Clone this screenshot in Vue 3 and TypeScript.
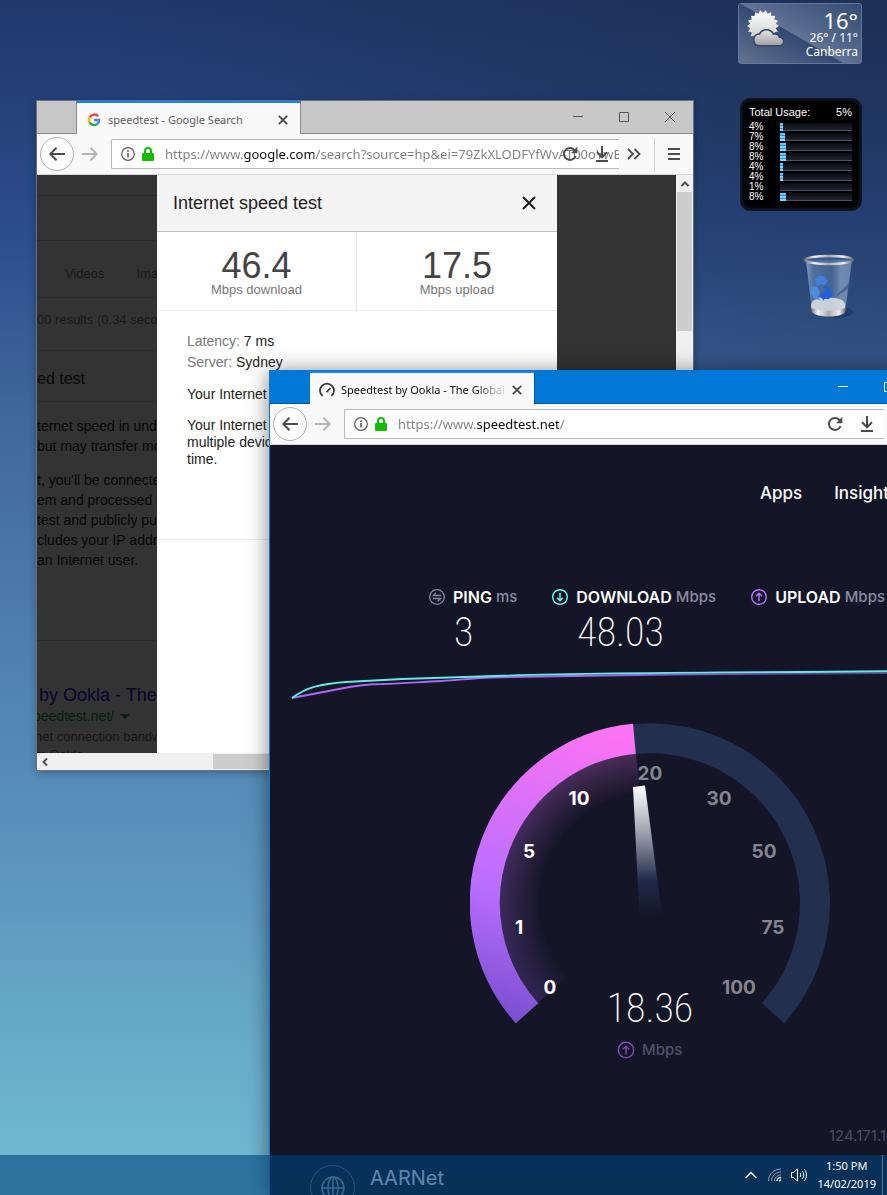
<script setup lang="ts">
interface BrowserWindow {
  id: string
  title: string
  url: string
}

const windows: BrowserWindow[] = [
  {
    id: 'google',
    title: 'speedtest - Google Search',
    url: 'https://www.google.com/search?source=hp&ei=79ZkXLODFYfWvAT00oYwBg',
  },
  { id: 'ookla', title: 'Speedtest by Ookla - The Global Broadband', url: 'https://www.speedtest.net/' },
]

const cores: { load: number; width: number }[] = [
  { load: 4, width: 3 },
  { load: 7, width: 5 },
  { load: 8, width: 6 },
  { load: 8, width: 6 },
  { load: 4, width: 3 },
  { load: 4, width: 3 },
  { load: 1, width: 0 },
  { load: 8, width: 6 },
]

const ticks = [
  { text: '0', x: 80, y: 271, on: true },
  { text: '1', x: 49, y: 211, on: true },
  { text: '5', x: 59, y: 135, on: true },
  { text: '10', x: 109, y: 82, on: true },
  { text: '20', x: 180, y: 57, on: false },
  { text: '30', x: 249, y: 82, on: false },
  { text: '50', x: 294, y: 135, on: false },
  { text: '75', x: 303, y: 211, on: false },
  { text: '100', x: 269, y: 271, on: false },
]

function sunPoints(): string {
  const points: string[] = []
  for (let i = 0; i < 36; i++) {
    const r = i % 2 ? 13 : 16
    const a = (i * Math.PI) / 18
    points.push(`${(18 + r * Math.cos(a)).toFixed(2)},${(17 + r * Math.sin(a)).toFixed(2)}`)
  }
  return points.join(' ')
}
const sun = sunPoints()
</script>

<template>
  <main class="desktop">
    <aside class="gadgets">
      <section class="weather" aria-label="Weather">
        <svg class="sky" viewBox="0 0 40 38" aria-hidden="true">
          <defs>
            <linearGradient id="sunFill" x1="0" y1="0" x2="0" y2="1">
              <stop offset="0" stop-color="#fff" /><stop offset="1" stop-color="#c9c9c9" />
            </linearGradient>
            <linearGradient id="cloudFill" x1="0" y1="0" x2="0" y2="1">
              <stop offset="0" stop-color="#e4e4e4" /><stop offset="1" stop-color="#a2a2a2" />
            </linearGradient>
          </defs>
          <polygon :points="sun" fill="url(#sunFill)" />
          <path d="M10 33c-2-5 2-8 5-7 2-6 11-6 13 0 3-1 5 0 6 3 5 0 5 6 1 7H15c-3 0-5-1-5-3z" fill="url(#cloudFill)" stroke="#34466b" stroke-width="3" paint-order="stroke" />
        </svg>
        <div class="readings">
          <strong>16°</strong>
          <span>26° / 11°</span>
          <span>Canberra</span>
        </div>
      </section>

      <section class="cpu" aria-label="Processor usage">
        <header><span>Total Usage:</span><span>5%</span></header>
        <ul>
          <li v-for="(core, i) in cores" :key="i">
            <span>{{ core.load }}%</span>
            <div class="track"><div class="level" :style="{ width: core.width + 'px' }"></div></div>
          </li>
        </ul>
      </section>

      <a class="bin" href="#" aria-label="Recycle Bin">
        <svg viewBox="0 0 54 68" width="54" height="68" aria-hidden="true">
          <defs>
            <linearGradient id="glass" x1="0" x2="1">
              <stop offset="0" stop-color="#c9dcf0" stop-opacity=".6" />
              <stop offset=".15" stop-color="#7fa4cf" stop-opacity=".45" />
              <stop offset=".55" stop-color="#6f95c2" stop-opacity=".35" />
              <stop offset=".75" stop-color="#b6cde6" stop-opacity=".5" />
              <stop offset="1" stop-color="#a9c2de" stop-opacity=".5" />
            </linearGradient>
            <linearGradient id="metal" x1="0" x2="1">
              <stop offset="0" stop-color="#777" /><stop offset=".2" stop-color="#f4f4f4" />
              <stop offset=".5" stop-color="#aaa" /><stop offset=".8" stop-color="#f0f0ee" />
              <stop offset="1" stop-color="#666" />
            </linearGradient>
          </defs>
          <ellipse cx="34" cy="60" rx="16" ry="6" fill="#0c2348" opacity=".35" />
          <path d="M3 8l6 52c4 6 29 6 33 0l7-52z" fill="url(#glass)" />
          <path d="M8 53c1-6 8-7 12-8 8 1 20 0 22 7v4c-6 5-28 5-34 0z" fill="#dfe3e5" opacity=".85" />
          <path d="M8 55c4 5 29 5 35 0l-1 5c-4 6-28 6-33 0z" fill="url(#metal)" />
          <path d="M11 28l5-4h5l4 5-3 4-4-1-4 2z" fill="#3f80dc" />
          <path d="M8 34l6 1 3 5-2 4 2 4-5-1-4-5z" fill="#4c8de4" />
          <path d="M21 34l5 1 3 8-3 4h-5v2l-4-5 5-5v3l1-1z" fill="#1d5fe0" />
          <path d="M34 43c4-5 10-8 13-14v5c-3 5-8 6-13 10z" fill="#31598e" opacity=".7" />
          <ellipse cx="26" cy="8" rx="24" ry="4" fill="#4c72a3" fill-opacity=".5" stroke="url(#metal)" stroke-width="2.400" />
        </svg>
      </a>
    </aside>

    <article v-for="win in windows" :key="win.id" class="window" :class="win.id">
      <header class="titlebar">
        <div class="tab">
          <svg v-if="win.id === 'google'" width="16" height="16" viewBox="0 0 16 16" fill="none" stroke-width="2.4" aria-hidden="true">
            <path d="M12.1 4.3A5 5 0 0 0 3.7 5.5" stroke="#ea4335" />
            <path d="M3.7 5.4a5 5 0 0 0 0 5.2" stroke="#fbbc05" />
            <path d="M3.6 10.4a5 5 0 0 0 7.8 1.4" stroke="#34a853" />
            <path d="M8 8h5a5 5 0 0 1-1.7 3.9" stroke="#4285f4" />
          </svg>
          <svg v-else width="16" height="16" viewBox="0 0 16 16" fill="none" stroke="#38383d" stroke-width="1.8" aria-hidden="true">
            <path d="M3.6 14A7 7 0 1 1 12.4 14M7.5 10.2l4-4.2" />
          </svg>
          <span class="tab-title">{{ win.title }}</span>
          <button class="tab-close" aria-label="Close tab">
            <svg width="10" height="10" viewBox="0 0 10 10" stroke="#444" stroke-width="1.7"><path d="M.8.8l8.4 8.4M9.2.8L.8 9.2" /></svg>
          </button>
        </div>
        <div class="controls">
          <button aria-label="Minimize"><svg width="10" height="10" viewBox="0 0 10 10"><path d="M0 4.5h10" /></svg></button>
          <button aria-label="Maximize"><svg width="10" height="10" viewBox="0 0 10 10"><path d="M.5.5h9v9h-9z" /></svg></button>
          <button aria-label="Close"><svg width="10" height="10" viewBox="0 0 10 10"><path d="M0 0l10 10M10 0L0 10" /></svg></button>
        </div>
      </header>

      <nav class="toolbar" aria-label="Navigation">
        <button class="back" aria-label="Back">
          <svg width="16" height="16" viewBox="0 0 16 16" fill="none" stroke="#4c4c50" stroke-width="2"><path d="M16 8H1.5M7.5 1.8L1.3 8l6.2 6.2" /></svg>
        </button>
        <button class="forward" aria-label="Forward" disabled>
          <svg width="16" height="16" viewBox="0 0 16 16" fill="none" stroke="#b5b5b7" stroke-width="2"><path d="M0 8h14.5M8.5 1.8L14.7 8l-6.2 6.2" /></svg>
        </button>
        <div class="address">
          <svg width="14" height="14" viewBox="0 0 14 14" fill="none" stroke="#5c5c60" aria-hidden="true">
            <circle cx="7" cy="7" r="6.3" stroke-width="1.2" /><path d="M7 6v4.6M7 3.2v1.7" stroke-width="1.6" />
          </svg>
          <svg width="12" height="14" viewBox="0 0 12 14" aria-hidden="true">
            <path d="M3 7V4a3 3 0 0 1 6 0v3" fill="none" stroke="#12bc00" stroke-width="2" />
            <rect y="6" width="12" height="8" rx="1" fill="#12bc00" />
          </svg>
          <input type="text" :value="win.url" aria-label="Address" spellcheck="false" />
          <div class="address-actions">
            <button aria-label="Reload">
              <svg width="16" height="16" viewBox="0 0 16 16" fill="none" stroke="#4c4c50" stroke-width="2"><path d="M13.6 10A6 6 0 1 1 13 4.6" /><path d="M15.3.8v6.4H9z" fill="#4c4c50" stroke="none" /></svg>
            </button>
            <button aria-label="Downloads">
              <svg width="14" height="16" viewBox="0 0 14 16" fill="none" stroke="#4c4c50" stroke-width="2"><path d="M7 0v11M2 6.3l5 5 5-5M1 15h12" /></svg>
            </button>
          </div>
        </div>
        <button class="more" aria-label="More tools">
          <svg width="14" height="12" viewBox="0 0 14 12" fill="none" stroke="#4c4c50" stroke-width="1.8"><path d="M1 1l5 5-5 5M7.500 1l5 5-5 5" /></svg>
        </button>
        <button class="menu" aria-label="Menu">
          <svg width="12" height="12" viewBox="0 0 12 12" stroke="#4c4c50" stroke-width="2"><path d="M0 1h12M0 6h12M0 11h12" /></svg>
        </button>
      </nav>

      <div v-if="win.id === 'google'" class="google-page">
        <div class="results">
          <div class="r-top"></div>
          <div class="r-search"></div>
          <div class="r-tabs"><a href="#">Videos</a><a href="#">Images</a></div>
          <div class="r-count">00 results (0.34 seconds)</div>
          <h2>ed test</h2>
          <div class="r-about">
            <p>ternet speed in under<br />but may transfer more</p>
            <p>t, you'll be connected to<br />em and processed by<br />test and publicly published<br />cludes your IP address<br />an Internet user.</p>
          </div>
          <div class="r-hit">
            <a href="#">by Ookla - The</a>
            <cite>peedtest.net/ <i></i></cite>
            <p>net connection bandwidth<br />m Ookla</p>
          </div>
        </div>

        <section class="dialog">
          <header>
            <h1>Internet speed test</h1>
            <button aria-label="Close"><svg width="14" height="14" viewBox="0 0 14 14" stroke="#1b1b1b" stroke-width="2"><path d="M1 1l12 12M13 1L1 13" /></svg></button>
          </header>
          <div class="speeds">
            <div><strong>46.4</strong><span>Mbps download</span></div>
            <div><strong>17.5</strong><span>Mbps upload</span></div>
          </div>
          <div class="details">
            <dl>
              <div><dt>Latency:</dt> <dd>7 ms</dd></div>
              <div><dt>Server:</dt> <dd>Sydney</dd></div>
            </dl>
            <p>Your Internet connection is very fast.</p>
            <p>Your Internet connection should be able to handle multiple devices streaming HD videos at the same time.</p>
          </div>
        </section>

        <div class="shade"></div>
        <div class="vscroll">
          <svg width="16" height="17" viewBox="0 0 16 17" fill="none" stroke="#505050" stroke-width="2"><path d="M4.500 11L8 7.500l3.500 3.500" /></svg>
          <div class="thumb"></div>
        </div>
        <div class="hscroll">
          <svg width="16" height="16" viewBox="0 0 16 16" fill="none" stroke="#505050" stroke-width="2"><path d="M10 4.500L6.500 8l3.500 3.500" /></svg>
          <div class="thumb"></div>
        </div>
      </div>

      <div v-else class="ookla-page">
        <div class="ookla-content">
          <nav class="site-nav"><a href="#">Apps</a><a href="#">Insights</a></nav>

          <section class="metrics">
            <div>
              <h3>
                <svg width="16" height="16" viewBox="0 0 16 16" fill="none" stroke="#8a8ba3" stroke-width="1.3"><circle cx="8" cy="8" r="7.300" /><path d="M12 6.500H4.500L7 3.800M4 9.500h7.500L9 12.200" /></svg>
                PING <small>ms</small>
              </h3>
              <output>3</output>
            </div>
            <div>
              <h3>
                <svg width="16" height="16" viewBox="0 0 16 16" fill="none" stroke="#6afff3" stroke-width="1.400"><circle cx="8" cy="8" r="7.300" /><path d="M8 4v7.500M5 8.700l3 3 3-3" /></svg>
                DOWNLOAD <small>Mbps</small>
              </h3>
              <output>48.03</output>
            </div>
            <div>
              <h3>
                <svg width="16" height="16" viewBox="0 0 16 16" fill="none" stroke="#bf71ff" stroke-width="1.400"><circle cx="8" cy="8" r="7.300" /><path d="M8 12V4.500M5 7.300l3-3 3 3" /></svg>
                UPLOAD <small>Mbps</small>
              </h3>
            </div>
          </section>

          <svg class="chart" width="760" height="40" viewBox="0 0 760 40" fill="none" stroke-width="1.800" aria-hidden="true">
            <defs>
              <linearGradient id="upTrace" gradientUnits="userSpaceOnUse" x1="0" y1="0" x2="760" y2="0">
                <stop offset=".4" stop-color="#b266f5" /><stop offset=".75" stop-color="#594287" />
              </linearGradient>
            </defs>
            <path d="M22 33L69 24C89 20 97 19 112 19C139 18 149 17 172 16C189 15 204 13 220 12.500L300 11L400 9.500L540 8.500L760 7.500" stroke="url(#upTrace)" />
            <path d="M22 33C37 22 50 19 76 17C110 15 145 13 210 11.500C300 8 400 7.500 530 7L760 5" stroke="#5ceee4" />
          </svg>

          <svg class="gauge" width="360" height="360" viewBox="0 0 360 360" role="img" aria-label="Upload speed 18.36 Mbps">
            <defs>
              <linearGradient id="arc" gradientUnits="userSpaceOnUse" x1="60" y1="300" x2="150" y2="0">
                <stop offset="0" stop-color="#7b50cf" />
                <stop offset=".38" stop-color="#b96eff" />
                <stop offset="1" stop-color="#ff74f2" />
              </linearGradient>
              <radialGradient id="glow" gradientUnits="userSpaceOnUse" cx="180" cy="180" r="150">
                <stop offset=".72" stop-color="#fff" stop-opacity="0" />
                <stop offset="1" stop-color="#fff" stop-opacity=".25" />
              </radialGradient>
              <mask id="fade"><rect width="360" height="360" fill="url(#glow)" /></mask>
              <linearGradient id="needle" x1="0" y1="0" x2="0" y2="1">
                <stop offset="0" stop-color="#fff" />
                <stop offset=".35" stop-color="#a0a3b0" />
                <stop offset=".72" stop-color="#1f2b4a" />
                <stop offset="1" stop-color="#1f2b4a" stop-opacity="0" />
              </linearGradient>
            </defs>
            <path d="M57 290.200A165 165 0 1 1 303 290.200" fill="none" stroke="#222f4e" stroke-width="30" />
            <path d="M180 180L68 280A150 150 0 0 1 166 30.600Z" fill="url(#arc)" mask="url(#fade)" />
            <path d="M57 290.200A165 165 0 0 1 164.400 15.700" fill="none" stroke="url(#arc)" stroke-width="30" />
            <path d="M163 64l12-1.500 17 130-22.500 2z" fill="url(#needle)" />
            <text v-for="t in ticks" :key="t.text" :x="t.x" :y="t.y" :class="{ on: t.on }">{{ t.text }}</text>
            <text class="reading" x="180" y="299">18.36</text>
            <g fill="none" stroke="#7f48ad" stroke-width="1.500"><circle cx="156" cy="327" r="7.700" /><path d="M156 331.500v-8M152.700 326.500l3.300-3.300 3.300 3.300" /></g>
            <text class="unit" x="172" y="332">Mbps</text>
          </svg>

          <footer>
            <span class="ip">124.171.100.1</span>
            <div class="provider">
              <span class="globe">
                <svg width="24" height="24" viewBox="0 0 24 24" fill="none" stroke="#9b9cb0" stroke-width="1.500"><circle cx="12" cy="12" r="11" /><ellipse cx="12" cy="12" rx="5" ry="11" /><path d="M1 12h22M12 1v22" /></svg>
              </span>
              <span>AARNet</span>
            </div>
          </footer>
        </div>
      </div>
    </article>

    <footer class="taskbar">
      <button aria-label="Show hidden icons"><svg width="12" height="8" viewBox="0 0 12 8" fill="none" stroke="#fff" stroke-width="1.500"><path d="M.7 7L6 1.500 11.300 7" /></svg></button>
      <button aria-label="Network">
        <svg width="14" height="14" viewBox="0 0 14 14" fill="none" stroke="#8ba3bb"><path d="M.5 13C.5 6 6 1 13 1M3.500 13C3.500 8 8 4 13 4M6.500 13C6.500 10 9 7 13 7" /><path d="M9 13c0-2 2-3.500 4-3.500M11 13l2-1" stroke="#fff" stroke-width="1.500" /></svg>
      </button>
      <button aria-label="Volume">
        <svg width="16" height="14" viewBox="0 0 16 14" fill="none" stroke="#fff"><path d="M.5 4.500h2l4-3.500v12l-4-3.500h-2zM9 5c1 1 1 3 0 4M11 3c2.300 2 2.300 6 0 8M13.200 1c3 3 3 9 0 12" /></svg>
      </button>
      <time><span>1:50 PM</span><span>14/02/2019</span></time>
      <button class="peek" aria-label="Show desktop"></button>
    </footer>
  </main>
</template>

<style>
html,
body {
  background: #6aaecb;
}
</style>

<style scoped>
* {
  box-sizing: border-box;
}
button {
  display: flex;
  align-items: center;
  justify-content: center;
  padding: 0;
  border: 0;
  background: none;
}
svg {
  display: block;
  flex: none;
}
h1, h2, h3, p, ul, dl, dd {
  margin: 0;
  padding: 0;
  font-weight: 400;
}
a {
  color: inherit;
  text-decoration: none;
}
.desktop {
  position: relative;
  min-height: 100vh;
  overflow: hidden;
  background:
    radial-gradient(ellipse 90% 50% at 100% 0, rgba(26, 42, 70, 0.6), transparent),
    linear-gradient(180deg, #20386c 0, #2b4b8a 18%, #41699f 36%, #5080b2 55%, #5b94bd 72%, #6ab0cb 90%, #72bad2 100%);
  font-family: "Noto Sans", sans-serif;
}
.gadgets {
  display: flex;
  flex-direction: column;
  align-items: flex-end;
  padding: 3px 25px;
}
.weather {
  display: flex;
  justify-content: space-between;
  width: 124px;
  height: 61px;
  padding: 5px 3px 0 6px;
  border: 1px solid #65779a;
  border-radius: 3px;
  background:
    linear-gradient(210deg, rgba(255, 255, 255, 0.08) 0, rgba(255, 255, 255, 0.24) 53%, transparent 54%),
    linear-gradient(30deg, #63728e, #2a4270 55%, #223c69);
  color: #fff;
}
.sky {
  width: 40px;
  height: 38px;
}
.readings {
  display: flex;
  flex-direction: column;
  align-items: flex-end;
  font-size: 12px;
  line-height: 14px;
  white-space: nowrap;
}
.readings strong {
  font-size: 22px;
  font-weight: 400;
  line-height: 22px;
}
.cpu {
  width: 122px;
  height: 113px;
  margin-top: 34px;
  padding: 7px 9px 7px 8px;
  border: 1px solid #10182b;
  border-radius: 10px;
  background: #000;
  box-shadow: inset 0 0 5px #26303f;
  color: #fff;
  font-family: "Liberation Sans", sans-serif;
  font-size: 10px;
}
.cpu header {
  display: flex;
  justify-content: space-between;
  padding-bottom: 4px;
  font-size: 11px;
  line-height: 12px;
}
.cpu ul {
  list-style: none;
}
.cpu li {
  display: flex;
  align-items: center;
  justify-content: space-between;
  height: 10px;
  line-height: 10px;
}
.track {
  width: 72px;
  height: 8px;
  border-bottom: 1px solid #495066;
  background: linear-gradient(#0b0c10, #20222e);
}
.level {
  height: 8px;
  background: linear-gradient(#5fc8ff 0 2px, #1597ee 2px 3px, #7cd4ff 3px 5px, #1597ee 5px 6px, #8ad8ff 6px);
}
.bin {
  margin: 41px 5px 0 0;
}

/* Browser windows */
.window {
  position: absolute;
  display: flex;
  flex-direction: column;
}
.window.google {
  left: 37px;
  top: 101px;
  width: 656px;
  height: 669px;
  box-shadow: 0 0 0 1px #66707f, 0 2px 8px rgba(0, 0, 0, 0.35);
}
.window.ookla {
  left: 269px;
  top: 370px;
  bottom: 0;
  width: 689px;
  border-left: 1px solid #0a78d4;
  box-shadow: 0 2px 20px rgba(0, 0, 0, 0.5);
}
.titlebar {
  display: flex;
  flex: none;
  justify-content: space-between;
  height: 33px;
  padding-left: 39px;
  border-bottom: 1px solid #8c8c8c;
  background: #c7c7c7;
}
.ookla .titlebar {
  height: 34px;
  padding: 1px 0 0 40px;
  border-color: #00559b;
  background: #0078d7;
}
.tab {
  display: flex;
  align-items: center;
  width: 225px;
  height: 33px;
  padding: 2px 8px 0 9px;
  border-top: 2px solid #0a84ff;
  border-right: 1px solid #8c8c8c;
  background: #f9f9f9;
  color: #5c5c61;
  font-size: 11px;
}
.google .tab {
  border-left: 1px solid #8c8c8c;
}
.ookla .tab {
  border-right-color: #00559b;
  color: #0c0c0d;
}
.tab-title {
  flex: 1;
  margin-left: 6px;
  overflow: hidden;
  white-space: nowrap;
}
.ookla .tab-title {
  mask-image: linear-gradient(90deg, #000 80%, transparent);
}
.tab-close {
  width: 18px;
  height: 18px;
}
.controls {
  display: flex;
}
.controls button {
  width: 46px;
  height: 32px;
}
.controls path {
  fill: none;
  stroke: #555;
}
.ookla .controls path {
  stroke: #fff;
}
.toolbar {
  display: flex;
  flex: none;
  align-items: center;
  height: 41px;
  padding-left: 3px;
  border-bottom: 1px solid #d7d7d7;
  background: #f9f9f9;
}
.back {
  width: 34px;
  height: 34px;
  border: 1px solid #b1b1b1;
  border-radius: 50%;
  background: #fdfdfd;
}
.forward {
  width: 32px;
  height: 32px;
}
.address {
  position: relative;
  display: flex;
  flex: 1;
  align-items: center;
  gap: 7px;
  min-width: 0;
  height: 30px;
  margin-left: 5px;
  padding-left: 9px;
  border: 1px solid #b8b8b8;
  border-right: 0;
  border-radius: 2px 0 0 2px;
  background: #fff;
}
.address input {
  flex: 1;
  min-width: 0;
  height: 28px;
  margin-left: 4px;
  padding: 0;
  border: 0;
  outline: 0;
  background: linear-gradient(90deg, #7d7d80 78px, #0c0c0d 78px 149px, #7d7d80 149px);
  -webkit-background-clip: text;
  background-clip: text;
  color: transparent;
  font-family: "Noto Sans", sans-serif;
  font-size: 13px;
}
.ookla .address input {
  background-image: linear-gradient(90deg, #7d7d80 78px, #0c0c0d 78px 161px, #7d7d80 161px);
}
.address-actions {
  position: absolute;
  right: 1px;
  display: flex;
}
.address-actions button {
  width: 32px;
  height: 28px;
}
.more {
  width: 30px;
  height: 32px;
  margin-right: 5px;
}
.menu {
  width: 39px;
  height: 33px;
  border-left: 1px solid #d4d4d4;
}

/* Search results behind the dialog */
.google-page {
  display: grid;
  flex: 1;
  grid-template-columns: 120px 400px 1fr 17px;
  grid-template-rows: 1fr 17px;
  min-height: 0;
  background: #fff;
  font-family: "Liberation Sans", sans-serif;
}
.results,
.shade {
  overflow: hidden;
  min-height: 0;
  background: #333;
}
.results {
  color: #060606;
  font-size: 14px;
  line-height: 20px;
  white-space: nowrap;
}
.results > div,
.results h2 {
  border-bottom: 1px solid #2a2a2a;
}
.r-top {
  height: 21px;
}
.r-search {
  height: 45px;
}
.r-tabs {
  display: flex;
  gap: 32px;
  height: 57px;
  padding: 23px 0 0 28px;
  color: #191919;
  font-size: 13px;
}
.r-count {
  height: 53px;
  padding-top: 12px;
  color: #191919;
  font-size: 13px;
}
.results h2 {
  height: 51px;
  padding-top: 18px;
  font-size: 16px;
}
.results .r-about {
  height: 239px;
  padding-top: 14px;
}
.r-about p + p {
  margin-top: 14px;
}
.results .r-hit {
  padding: 43px 0 0 2px;
  border: 0;
}
.r-hit a {
  display: block;
  color: #08042c;
  font-size: 18px;
  line-height: 22px;
}
.r-hit cite {
  display: flex;
  align-items: center;
  gap: 6px;
  margin-left: -6px;
  color: #00210c;
  font-style: normal;
}
.r-hit i {
  border: 5px solid transparent;
  border-top-color: #00210c;
  border-bottom: 0;
}
.r-hit p {
  margin-left: -4px;
  padding-top: 2px;
  color: #161616;
  font-size: 13px;
  line-height: 18px;
}

/* Speed test dialog */
.dialog {
  overflow: hidden;
  min-height: 0;
  color: #222;
  font-size: 14px;
}
.dialog > header {
  display: flex;
  align-items: center;
  justify-content: space-between;
  height: 57px;
  padding: 0 21px 0 16px;
  border-bottom: 1px solid #c0c0c0;
  background: #f4f4f4;
}
.dialog h1 {
  font-size: 18px;
}
.speeds {
  display: grid;
  grid-template-columns: 1fr 1fr;
  border-bottom: 1px solid #ebebeb;
}
.speeds div {
  display: flex;
  flex-direction: column;
  align-items: center;
  height: 78px;
  padding-top: 17px;
}
.speeds div:first-child {
  border-right: 1px solid #ebebeb;
}
.speeds strong {
  color: #444;
  font-size: 36px;
  font-weight: 400;
  line-height: 34px;
}
.speeds span {
  color: #777;
  font-size: 13px;
  line-height: 13px;
}
.details {
  height: 229px;
  padding: 20px 30px;
  border-bottom: 1px solid #ebebeb;
  line-height: 17px;
}
.details dl div {
  line-height: 21px;
}
.details dt,
.details dd {
  display: inline;
}
.details dt {
  color: #777;
}
.details p {
  margin-top: 14px;
}
.details dl + p {
  margin-top: 13px;
}
.vscroll {
  padding-left: 1px;
  background: #f0f0f0;
}
.vscroll .thumb {
  width: 15px;
  height: 139px;
  background: #cdcdcd;
}
.hscroll {
  display: flex;
  grid-column: 1 / -1;
  align-items: center;
  background: #f0f0f0;
}
.hscroll .thumb {
  width: 300px;
  height: 15px;
  margin-left: 160px;
  background: #cdcdcd;
}

/* Speedtest page */
.ookla-page {
  flex: 1;
  overflow: hidden;
  background: #141526;
  color: #fff;
  font-family: Inter, sans-serif;
}
.ookla-content {
  display: flex;
  flex-direction: column;
  width: 760px;
}
.site-nav {
  display: flex;
  gap: 32px;
  padding: 36px 0 0 490px;
  font-size: 17px;
  font-weight: 500;
  line-height: 24px;
}
.metrics {
  display: flex;
  gap: 35px;
  height: 124px;
  margin-top: 80px;
  padding-left: 159px;
  white-space: nowrap;
}
.metrics h3 {
  display: flex;
  align-items: center;
  gap: 8px;
  font-size: 16px;
  font-weight: 600;
  line-height: 24px;
}
.metrics small {
  margin-left: -4px;
  color: #8a8ba3;
  font-size: 15px;
  font-weight: 500;
}
.metrics output {
  display: block;
  padding-left: 25px;
  font-family: "Roboto Condensed", "Open Sans Condensed", "Noto Sans ExtraCondensed", Roboto, sans-serif;
  font-size: 40px;
  font-weight: 200;
  line-height: 48px;
}
.chart {
  margin-top: -44px;
}
.gauge {
  align-self: center;
  margin-top: 18px;
}
.gauge text {
  fill: #85868d;
  font-size: 19px;
  font-weight: 700;
  text-anchor: middle;
}
.gauge text.on {
  fill: #fff;
}
.gauge text.reading {
  fill: #fff;
  font-family: "Roboto Condensed", "Open Sans Condensed", "Noto Sans ExtraCondensed", Roboto, sans-serif;
  font-size: 40px;
  font-weight: 200;
}
.gauge text.unit {
  fill: #505168;
  font-size: 15px;
  font-weight: 500;
  text-anchor: start;
}
.ookla-content > footer {
  padding: 41px 0 0 40px;
}
.ip {
  display: block;
  padding-left: 519px;
  color: #4b4c61;
  font-size: 15px;
  line-height: 24px;
}
.provider {
  display: flex;
  gap: 15px;
  padding-top: 17px;
  color: #e6e8f0;
  font-size: 20px;
  line-height: 26px;
}
.globe {
  display: flex;
  align-items: center;
  justify-content: center;
  width: 45px;
  height: 45px;
  border: 1px solid #666780;
  border-radius: 50%;
}

/* Taskbar */
.taskbar {
  position: absolute;
  inset: auto 0 0;
  display: flex;
  align-items: center;
  justify-content: flex-end;
  height: 40px;
  background: rgba(0, 69, 125, 0.6);
  color: #fff;
}
.taskbar button {
  width: 24px;
  height: 40px;
}
.taskbar time {
  display: flex;
  flex-direction: column;
  align-items: center;
  margin: 0 6px;
  font-size: 11px;
  line-height: 18px;
}
.taskbar .peek {
  width: 5px;
  border-left: 1px solid #56748f;
}
</style>
